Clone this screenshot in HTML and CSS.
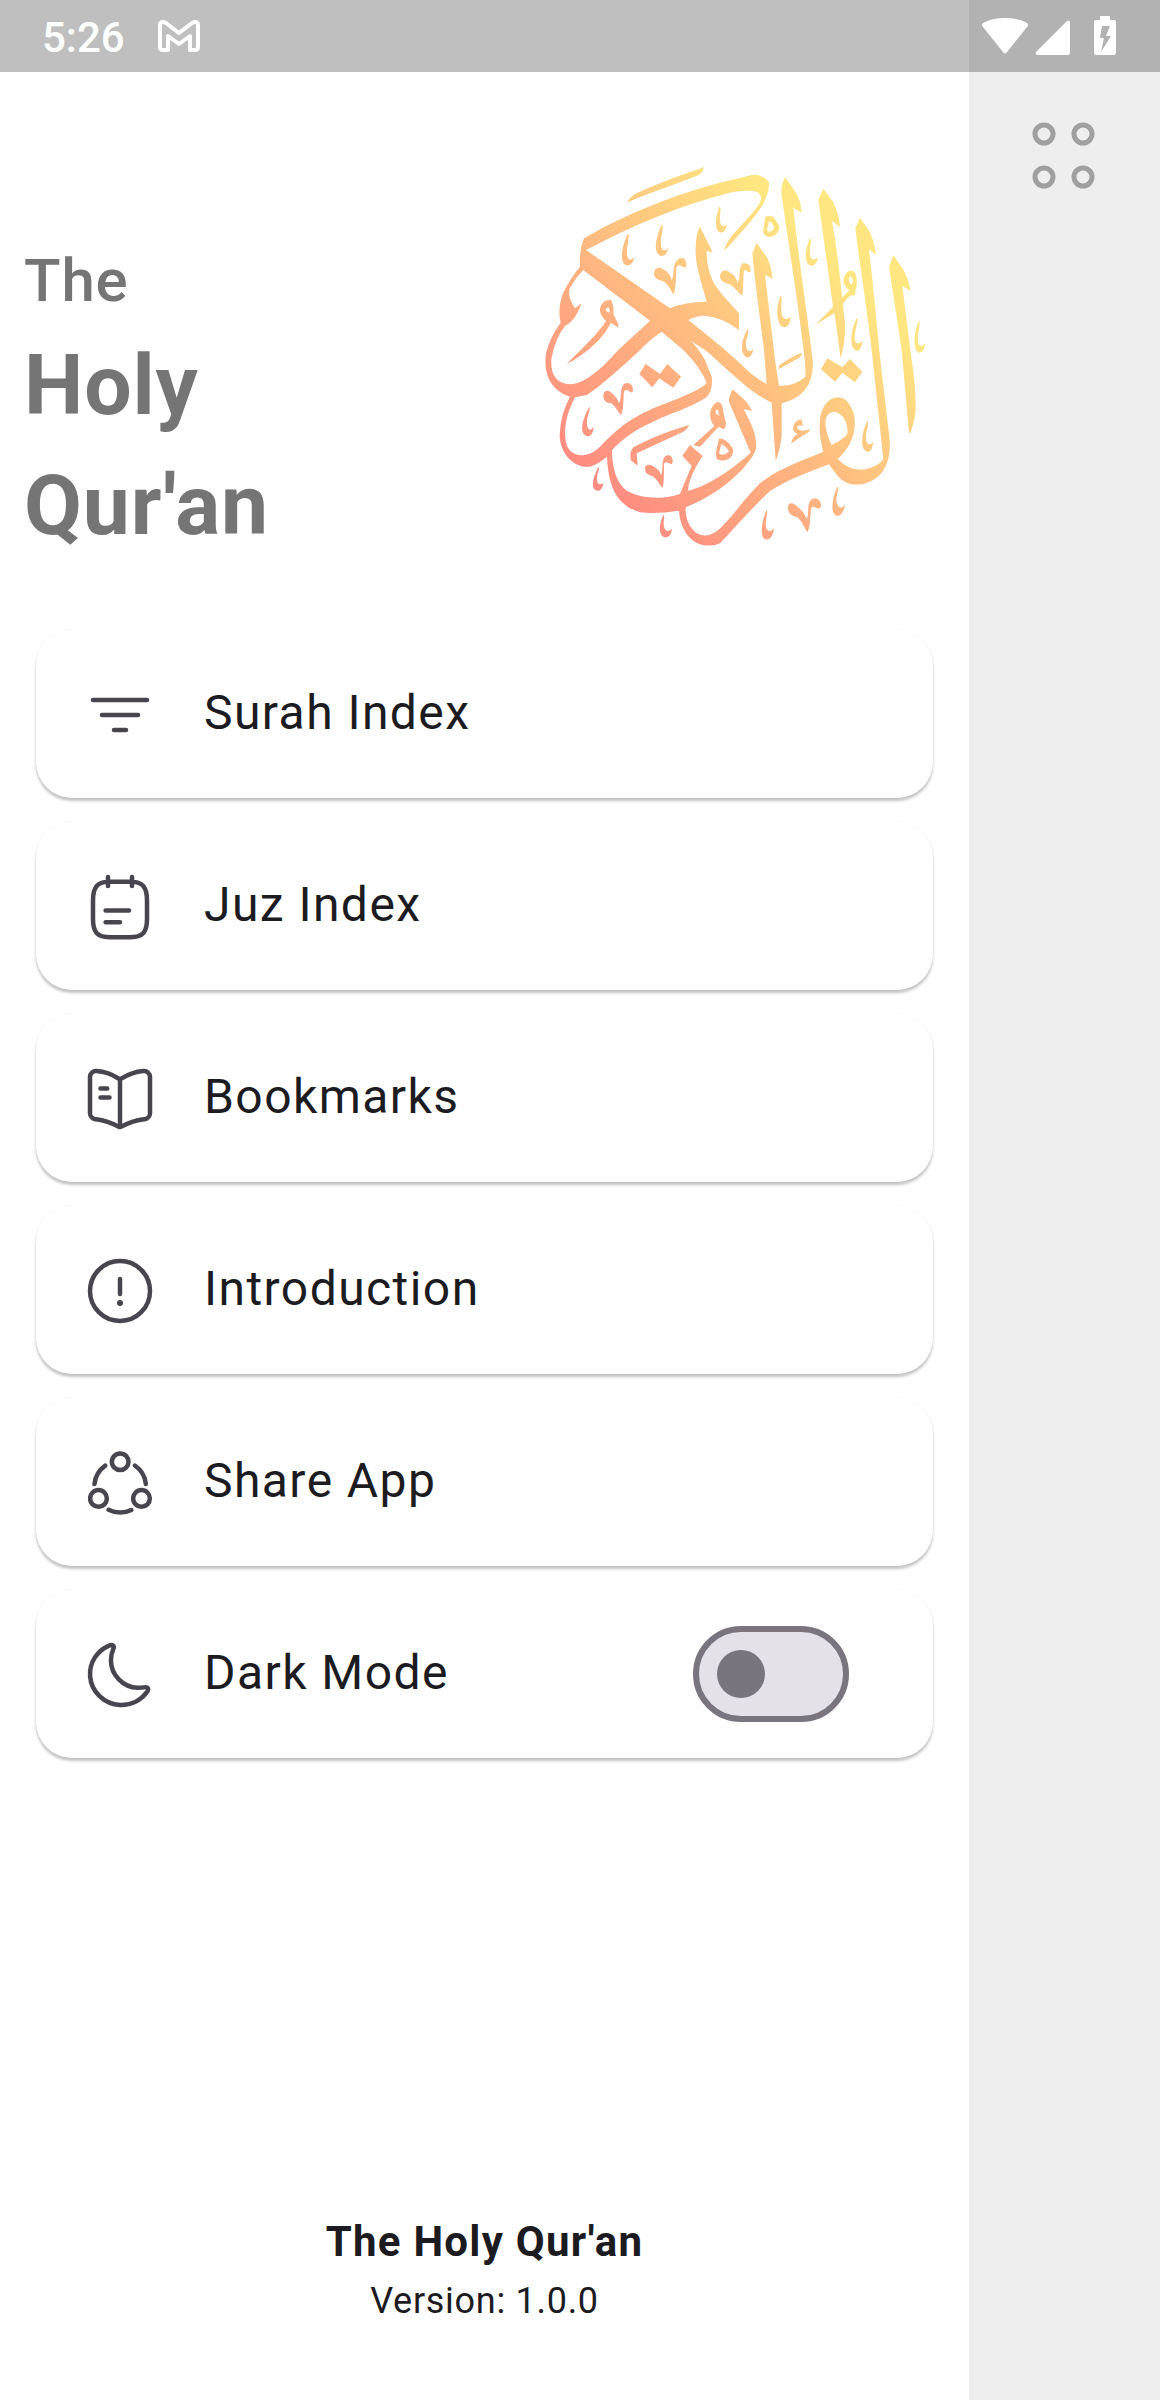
FILE: index.html
```html
<!DOCTYPE html>
<html lang="en">
<head>
<meta charset="utf-8">
<meta name="viewport" content="width=device-width, initial-scale=1">
<title>The Holy Qur'an</title>
<link rel="stylesheet" href="styles.css">
</head>
<body>
<div class="status-bar">
  <div class="status-group">
    <time class="clock">5:26</time>
    <svg class="gmail" viewBox="0 0 42 32" aria-hidden="true"><path d="M2 27V5Q2 2 5 2Q6 2 8 3L21 13L34 3Q36 2 37 2Q40 2 40 5V27Q40 30 37 30H32V16L21 24L10 16V30H5Q2 30 2 27Z" fill="none" stroke="#fff" stroke-width="4" stroke-linejoin="round"/></svg>
  </div>
  <svg class="system-icons" viewBox="0 0 136 40" aria-hidden="true">
    <path fill="#fff" d="M1 11Q-1 9 1 7Q10 2 23 2T45 7Q47 9 45 11L25 36Q23 39 21 36Z"/>
    <path fill="#fff" d="M85 5Q88 4 88 6V37Q88 39 86 39H56Q53 39 54 36Z"/>
    <path fill="#fff" d="M118 0H128V4H132Q134 4 134 6V37Q134 39 132 39H114Q112 39 112 37V6Q112 4 114 4H118Z"/>
    <path fill="#b2b2b2" d="M120 10H128L124 20H129L119 36L122 22H118Z"/>
  </svg>
</div>
<div class="screen">
  <main class="drawer">
    <header class="brand">
      <h1 class="title"><span class="title-small">The</span> <span>Holy</span> <span>Qur'an</span></h1>
      <svg class="emblem" viewBox="45 30 1200 1200" role="img" aria-label="The Holy Qur'an calligraphy">
        <defs>
          <linearGradient id="glow" gradientUnits="userSpaceOnUse" x1="330" y1="1120" x2="1010" y2="440">
            <stop offset="0" stop-color="#ff8c80"/><stop offset=".5" stop-color="#ffb980"/><stop offset="1" stop-color="#ffe680"/>
          </linearGradient>
          <clipPath id="ticks">
            <path d="M293 252C278 285 270 320 280 338C290 352 308 348 313 322C302 334 292 330 291 312C289 290 297 275 296 254Z"/>
            <path d="M395 224C380 257 372 292 382 310C392 324 410 320 415 294C404 306 394 302 393 284C391 262 399 247 398 226Z"/>
            <path d="M568 170C556 200 555 230 564 243C574 254 588 246 591 222C581 233 571 230 570 214C568 200 573 185 571 172Z"/>
            <path d="M840 265C825 298 824 325 832 340C842 354 860 348 864 320C853 332 842 330 840 314C838 295 844 280 843 267Z"/>
            <path d="M752 438C738 470 740 500 748 520C758 540 780 536 782 500C771 512 758 508 755 492C752 470 756 455 755 440Z"/>
            <path d="M652 538C635 570 632 595 640 612C650 630 666 624 670 596C659 608 650 606 648 588C646 568 656 555 655 540Z"/>
            <path d="M980 505C963 538 961 572 968 592C978 610 994 604 998 572C987 584 977 584 974 566C972 545 984 520 983 507Z"/>
            <path d="M1167 513C1151 545 1151 580 1158 600C1168 614 1183 610 1185 580C1176 592 1166 590 1164 575C1161 553 1170 530 1169 515Z"/>
            <path d="M178 770C162 800 150 830 160 850C170 866 190 860 191 830C181 844 172 840 171 822C169 800 180 788 179 772Z"/>
            <path d="M205 952C190 980 184 1005 193 1018C204 1027 218 1022 220 998C210 1007 202 1004 201 990C199 973 208 965 207 954Z"/>
            <path d="M400 1095C388 1120 386 1145 396 1157C408 1168 424 1160 426 1136C416 1147 405 1144 402 1130C399 1115 404 1105 402 1096Z"/>
            <path d="M1012 813C998 840 992 875 1000 895C1010 913 1028 908 1029 875C1020 889 1010 885 1008 868C1006 845 1016 830 1014 815Z"/>
            <path d="M922 1010C908 1040 904 1070 910 1088C920 1106 940 1098 945 1064C934 1078 924 1074 920 1058C917 1040 926 1025 924 1012Z"/>
            <path d="M710 1080C696 1110 692 1142 698 1160C708 1178 729 1168 732 1134C722 1148 711 1144 708 1130C705 1110 713 1095 711 1082Z"/>
          </clipPath>
        </defs>
        <rect x="0" y="0" width="1245" height="1245" fill="url(#glow)" clip-path="url(#ticks)"/>
        <g fill="url(#glow)" fill-rule="evenodd">
          <path d="M290 158Q300 142 312 134C360 110 450 76 522 52Q518 68 505 76L430 104C380 122 330 140 290 158Z"/>
          <path d="M162 265C300 185 470 118 630 84L655 77Q690 66 717 96Q718 130 698 165C670 210 620 262 582 303Q588 280 605 258C635 224 670 188 686 164Q702 142 682 126Q655 118 600 128C450 165 310 225 168 300L420 475Q465 455 530 455C515 400 498 350 497 310Q495 255 510 230L548 307L530 303C530 345 540 385 562 415C580 440 605 465 627 490V540Q575 500 520 497Q497 498 475 510C540 562 590 602 630 640Q670 682 710 702L702 600C690 500 675 400 667 310L680 279L711 322Q723 345 728 386L705 374C715 460 725 540 735 630L747 707Q790 710 827 680Q826 640 819 585C800 430 775 280 754 130Q752 110 765 81L797 127Q812 150 815 188L790 173C805 320 830 480 848 630Q855 735 755 760V858Q750 900 737 933L725 758Q670 730 630 692C585 655 540 610 525 600L483 573Q505 595 525 630L545 680Q550 718 530 742C480 775 420 790 370 815C315 838 280 865 246 900C246 955 260 1000 290 1022C330 1045 400 1050 450 1032Q465 995 485 948L457 917L480 885L518 918Q478 975 473 1023C540 1005 610 955 662 908L597 755Q596 740 608 718L648 754L667 782L641 778C665 825 680 850 678 895C675 920 620 985 560 1023Q520 1050 467 1072Q465 1110 487 1138C510 1165 540 1160 565 1140C600 1110 640 1050 690 1000C745 955 810 935 880 905Q862 840 873 790Q890 742 925 742Q950 740 970 785C985 845 960 895 923 927Q960 965 1005 958Q1045 950 1060 928L1025 600C1010 470 990 350 976 235L990 203L1017 242Q1034 275 1038 314L1017 298C1030 410 1040 520 1051 630L1078 860C1085 920 1070 985 1000 1002C945 1010 930 990 897 943C840 965 770 990 720 1023C680 1060 640 1105 570 1180Q552 1190 518 1185C475 1175 450 1130 447 1082Q380 1092 330 1087C260 1065 235 1010 231 920Q205 942 180 950C130 955 90 910 89 855Q92 790 120 740C60 720 40 670 48 610Q60 560 92 518Q82 480 98 432Q120 385 150 350Q147 300 162 265ZM160 360L360 512L265 600C220 650 170 700 120 703Q60 700 64 628Q75 565 105 528Q135 515 155 460L135 475Q105 430 125 405Q140 380 160 360ZM395 545Q355 572 325 605C270 655 210 710 170 735L135 742C110 790 98 840 110 885C125 925 175 925 210 890C265 835 300 805 370 775C430 750 500 728 530 700Q515 655 460 600ZM915 785C880 785 878 830 905 885Q955 860 953 845Q950 795 915 785Z"/>
          <path d="M865 150L880 116L910 157Q926 190 930 232L906 212C925 320 935 430 945 520Q946 580 932 625L915 500L909 470Z"/>
          <path d="M1077 350L1090 316L1122 362Q1138 395 1141 423L1117 408L1145 630Q1158 710 1157 780Q1154 815 1140 852Q1135 845 1135 825L1115 600Z"/>
          <path d="M858 523L885 495L958 420Q938 408 941 385Q948 360 968 362Q983 370 980 402L974 437Q962 432 952 445L928 474Q920 485 900 498ZM960 378Q950 392 965 404Q975 388 960 378Z"/>
          <path d="M706 200Q718 196 730 200L748 228Q748 244 739 251Q728 263 716 261Q696 254 700 240ZM717 213L711 240Q720 252 733 235Q730 220 717 213Z"/>
          <path d="M490 885L553 828Q538 810 541 785Q548 758 566 756Q580 762 580 785L588 820Q586 840 578 836L566 830L510 890ZM562 778Q548 785 567 798Q568 786 562 778Z"/>
          <path d="M568 865Q588 865 608 895Q612 912 600 924Q580 937 562 928Q555 920 560 895ZM574 882L567 910Q578 920 597 905Q590 890 574 882Z"/>
          <path d="M243 518C220 565 170 610 110 642C160 592 205 550 228 513Q208 495 210 475Q218 447 243 450Q253 470 250 492L265 523V533ZM234 472Q218 482 239 488Q240 476 234 472Z"/>
          <path d="M477 825Q475 835 460 845L320 910L323 947L302 930Q298 905 310 892Q380 855 455 832Z"/>
          <path d="M783 881L790 862L803 852Q785 845 790 828Q800 807 815 809L819 828Q808 822 800 832Q806 843 820 842L841 838L836 846L813 860Z"/>
          <path d="M745 658L748 646Q782 620 815 608Q817 617 805 625Z"/>
          <path d="M347 642L328 672L367 712L388 685L430 713L453 680L412 642L390 672Z"/>
          <path d="M892 625L873 658L915 695L937 668L975 697L997 665L960 627L937 652Z"/>
          <path d="M372 370C375 350 392 350 402 360C415 366 422 378 425 390C435 375 425 350 440 332C452 318 470 322 469 345C466 358 460 352 450 346C440 345 438 352 439 364C438 390 437 415 431 433C425 425 415 403 402 395C388 390 372 388 372 370Z"/>
          <path d="M570 378C573 358 590 358 600 368C613 374 620 386 623 398C633 383 623 358 638 340C650 340 664 342 662 365C652 370 650 356 642 362C638 390 642 415 636 437C625 429 613 411 600 403C586 398 570 396 570 378Z"/>
          <path d="M220 735C223 718 238 720 246 730C258 740 264 750 267 760C277 745 267 720 282 702C296 694 310 702 309 722C306 734 300 722 290 720C280 719 282 730 281 738C280 765 279 780 273 796C267 790 257 770 244 760C230 758 220 755 220 735Z"/>
          <path d="M345 955C348 938 366 945 376 953C386 958 390 965 393 975C401 960 393 935 404 920C418 910 429 918 428 935C425 948 420 940 410 937C400 936 402 945 402 955C401 980 403 1000 397 1014C390 1006 382 988 370 980C358 974 345 974 345 955Z"/>
          <path d="M774 1070C777 1052 794 1062 804 1072C818 1082 826 1095 830 1108C838 1092 830 1065 842 1050C856 1040 874 1048 873 1068C870 1082 862 1074 852 1070C842 1069 843 1078 842 1088C840 1115 840 1130 832 1147C825 1137 815 1112 802 1102C784 1096 774 1092 774 1070Z"/>
        </g>
      </svg>
    </header>
    <nav aria-label="Main">
      <ul class="menu">
        <li><a class="card" href="#surah"><svg class="icon" viewBox="0 0 24 24" aria-hidden="true"><path d="M3 7h18M6 12h12M10 17h4"/></svg><span>Surah Index</span></a></li>
        <li><a class="card" href="#juz"><svg class="icon" viewBox="0 0 24 24" aria-hidden="true"><path d="M8 2v3M16 2v3M7.2 13.2H15M7.2 17.1H12M16 3.6c3.33.18 5 1.45 5 6.15v6.18c0 4.12-1 6.18-6 6.18H9c-5 0-6-2.06-6-6.18V9.75c0-4.7 1.67-5.96 5-6.15h8z"/></svg><span>Juz Index</span></a></li>
        <li><a class="card" href="#bookmarks"><svg class="icon" viewBox="0 0 24 24" aria-hidden="true"><path d="M22 16.74V4.67c0-1.2-.98-2.09-2.17-1.99h-.06c-2.1.18-5.29 1.25-7.07 2.37l-.17.11c-.29.18-.77.18-1.06 0l-.25-.15C9.44 3.9 6.26 2.84 4.16 2.67 2.97 2.57 2 3.47 2 4.66v12.08c0 .96.78 1.86 1.74 1.98l.29.04c2.17.29 5.52 1.39 7.44 2.44l.04.02c.27.15.7.15.96 0 1.92-1.06 5.28-2.17 7.46-2.46l.33-.04c.96-.12 1.74-1.02 1.74-1.98zM12 5.49v15M7.75 8.49H5.5M8.5 11.49h-3"/></svg><span>Bookmarks</span></a></li>
        <li><a class="card" href="#introduction"><svg class="icon" viewBox="0 0 24 24" aria-hidden="true"><circle cx="12" cy="12" r="10"/><path d="M12 8v5"/><path d="M11.995 16h.01" stroke-width="2"/></svg><span>Introduction</span></a></li>
        <li><a class="card" href="#share"><svg class="icon" viewBox="0 0 24 24" aria-hidden="true"><path d="M16.96 6.17c2 1.39 3.38 3.6 3.66 6.15M3.49 12.37a8.6 8.6 0 0 1 3.6-6.15M8.19 20.94c1.16.59 2.48.92 3.87.92 1.34 0 2.6-.3 3.73-.85"/><circle cx="12.06" cy="4.92" r="2.78"/><circle cx="4.83" cy="17.14" r="2.78"/><circle cx="19.17" cy="17.14" r="2.78"/></svg><span>Share App</span></a></li>
        <li><label class="card" for="dark-mode"><svg class="icon" viewBox="0 0 24 24" aria-hidden="true"><path d="M2.03 12.42c.36 5.15 4.73 9.34 9.96 9.57 3.69.16 6.99-1.56 8.97-4.27.82-1.11.38-1.85-.99-1.6-.67.12-1.36.17-2.08.14C13 16.06 9 11.97 8.98 7.14c-.01-1.3.26-2.53.75-3.65.54-1.24-.11-1.83-1.36-1.3C4.41 3.86 1.7 7.85 2.03 12.42z"/></svg><span>Dark Mode</span><input class="switch" id="dark-mode" type="checkbox" role="switch"></label></li>
      </ul>
    </nav>
    <footer class="about">
      <p class="about-name">The Holy Qur'an</p>
      <p class="about-version">Version: 1.0.0</p>
    </footer>
  </main>
  <aside class="page-edge">
    <button class="menu-button" type="button" aria-label="Menu">
      <svg viewBox="0 0 72 72" aria-hidden="true"><g fill="none" stroke="#a0a0a0" stroke-width="5"><circle cx="15" cy="14" r="9"/><circle cx="54" cy="14" r="9"/><circle cx="15" cy="57" r="9"/><circle cx="54" cy="57" r="9"/></g></svg>
    </button>
  </aside>
</div>
</body>
</html>
```
FILE: styles.css
```css
* { box-sizing: border-box; }

body {
  margin: 0;
  background: #fff;
  color: #1c1b1f;
  font-family: Roboto, "Liberation Sans", sans-serif;
}

/* translucent system bar lying over the drawer and the page behind it */
.status-bar {
  position: absolute;
  top: 0;
  left: 0;
  right: 0;
  height: 72px;
  padding: 0 42px;
  display: flex;
  align-items: center;
  justify-content: space-between;
  background: rgba(0, 0, 0, .25);
  color: #fff;
}

.status-group { display: flex; align-items: center; gap: 33px; }
.clock { font-size: 42px; line-height: 48px; font-weight: 500; padding-top: 3px; }
.gmail { width: 42px; height: 32px; }
.system-icons { width: 136px; height: 40px; }

.screen { display: flex; min-height: 100vh; }

.drawer {
  flex: 1;
  min-width: 0;
  display: flex;
  flex-direction: column;
}

.brand {
  display: flex;
  justify-content: space-between;
  padding: 160px 24px 0;
}

.title {
  margin: 0;
  padding-top: 76px;
  display: flex;
  flex-direction: column;
  color: #757575;
  font-size: 84px;
  line-height: 120px;
  font-weight: 700;
  letter-spacing: .01em;
}

.title-small { font-size: 60px; line-height: 90px; font-weight: 500; }
.emblem { width: 400px; height: 400px; }

.menu {
  list-style: none;
  margin: 0;
  padding: 64px 36px 48px;
  display: flex;
  flex-direction: column;
  gap: 24px;
}

.card {
  display: flex;
  align-items: center;
  gap: 48px;
  height: 168px;
  padding: 0 84px 0 48px;
  border-radius: 36px;
  background: #fff;
  box-shadow: 0 3px 3px rgba(0, 0, 0, .24), 0 0 2px rgba(0, 0, 0, .05);
  color: inherit;
  text-decoration: none;
  font-size: 48px;
  line-height: 60px;
  letter-spacing: .03em;
}

.card span { padding-bottom: 2px; }

.icon {
  width: 72px;
  height: 74px;
  padding-top: 2px;
  fill: none;
  stroke: #49454f;
  stroke-width: 1.5;
  stroke-linecap: round;
  stroke-linejoin: round;
}

.switch {
  appearance: none;
  width: 156px;
  height: 96px;
  margin: 0 0 0 auto;
  padding: 0 18px;
  display: flex;
  align-items: center;
  border: 6px solid #79747e;
  border-radius: 48px;
  background: #e6e0e9;
}

.switch::before {
  content: "";
  width: 48px;
  height: 48px;
  border-radius: 50%;
  background: #79747e;
}

.switch:checked { justify-content: flex-end; }

.about { margin-top: auto; padding-bottom: 70px; text-align: center; }
.about p { margin: 0; }
.about-name { font-size: 42px; line-height: 60px; font-weight: 700; letter-spacing: .03em; }
.about-version { font-size: 36px; line-height: 58px; letter-spacing: .02em; }

.page-edge {
  flex: 0 0 191px;
  padding-top: 120px;
  background: #eee;
  text-align: center;
}

.menu-button {
  width: 72px;
  height: 72px;
  padding: 0;
  border: 0;
  background: none;
}

.menu-button svg { display: block; width: 72px; height: 72px; }
```
